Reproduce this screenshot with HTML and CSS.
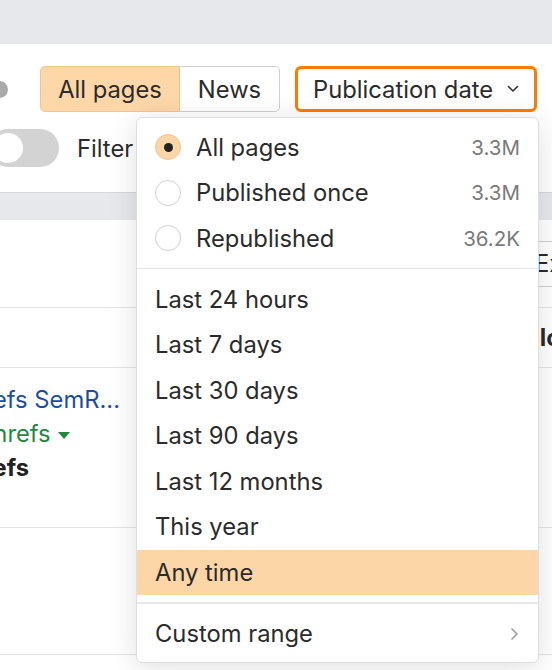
FILE: index.html
```html
<!DOCTYPE html>
<html>
<head>
<meta charset="utf-8">
<link rel="stylesheet" href="styles.css">
</head>
<body>
<div class="page">
  <div class="topbar"></div>

  <div class="toolbar">
    <span class="help"></span>
    <div class="seg">
      <button class="seg-btn seg-active">All pages</button>
      <button class="seg-btn seg-news">News</button>
    </div>
    <button class="pub-btn">
      <span>Publication date</span>
      <svg class="chev-down" width="12" height="8" viewBox="0 0 12 8"><polyline points="1.5,1.5 6,6 10.5,1.5" fill="none" stroke="#333" stroke-width="1.6" stroke-linecap="round" stroke-linejoin="round"/></svg>
    </button>
  </div>

  <div class="filters">
    <span class="toggle"><span class="knob"></span></span>
    <span class="filter-label">Filter</span>
  </div>

  <div class="table">
    <div class="thead"></div>
    <div class="row row-a">
      <span class="export">Export</span>
    </div>
    <div class="row row-b">
      <span class="blog">Blog</span>
    </div>
    <div class="row row-c">
      <div class="cell">
        <div class="link-title">Ahrefs SemR...</div>
        <div class="link-domain">ahrefs <span class="tri"></span></div>
        <div class="link-bold">Ahrefs</div>
      </div>
    </div>
    <div class="row row-d"></div>
    <div class="row row-e"></div>
  </div>

  <div class="dropdown">
    <div class="item">
      <span class="radio radio-on"><span class="dot"></span></span>
      <span class="label">All pages</span>
      <span class="count">3.3M</span>
    </div>
    <div class="item">
      <span class="radio"></span>
      <span class="label">Published once</span>
      <span class="count">3.3M</span>
    </div>
    <div class="item">
      <span class="radio"></span>
      <span class="label">Republished</span>
      <span class="count">36.2K</span>
    </div>
    <div class="sep"></div>
    <div class="item">Last 24 hours</div>
    <div class="item">Last 7 days</div>
    <div class="item">Last 30 days</div>
    <div class="item">Last 90 days</div>
    <div class="item">Last 12 months</div>
    <div class="item">This year</div>
    <div class="item item-active">Any time</div>
    <div class="sep sep-b"></div>
    <div class="item">
      <span class="label">Custom range</span>
      <svg class="chev-right" width="9" height="14" viewBox="0 0 9 14"><polyline points="2,2 7,7 2,12" fill="none" stroke="#9a9a9a" stroke-width="1.6" stroke-linecap="round" stroke-linejoin="round"/></svg>
    </div>
  </div>
</div>
</body>
</html>
```

FILE: styles.css
```css
* { box-sizing: border-box; }

html, body {
  margin: 0;
  padding: 0;
}

body {
  width: 552px;
  height: 670px;
  overflow: hidden;
  background: #ffffff;
  font-family: Inter, "Noto Sans", sans-serif;
  font-size: 23.75px;
  color: #2b2b2b;
}

.page {
  position: relative;
  width: 552px;
  height: 670px;
  overflow: hidden;
}

.topbar {
  height: 44px;
  background: #e7e8eb;
}

.toolbar {
  display: flex;
  align-items: center;
  height: 46px;
  margin-top: 22px;
}

.help {
  width: 17px;
  height: 17px;
  border-radius: 50%;
  background: #a9a9a9;
  margin-left: -9px;
  flex: none;
}

.seg {
  display: flex;
  margin-left: 32px;
  height: 46px;
}

.seg-btn {
  font: inherit;
  color: #2b2b2b;
  height: 46px;
  padding: 0;
  margin: 0;
  background: #fff;
  border: 1px solid #cfcfcf;
}

.seg-active {
  width: 140px;
  background: #fdd7a8;
  border-color: #f2c48f;
  border-radius: 5px 0 0 5px;
}

.seg-news {
  width: 100px;
  border-left: none;
  border-radius: 0 5px 5px 0;
}

.pub-btn {
  font: inherit;
  color: #2b2b2b;
  margin-left: 15px;
  width: 242px;
  height: 46px;
  padding: 0 0 0 15px;
  background: #fff;
  border: 3px solid #ff7a00;
  border-radius: 6px;
  display: flex;
  align-items: center;
}

.chev-down {
  margin-left: 14px;
}

.filters {
  display: flex;
  align-items: center;
  height: 38px;
  margin-top: 17px;
}

.toggle {
  position: relative;
  width: 70px;
  height: 38px;
  border-radius: 19px;
  background: #d3d3d3;
  margin-left: -11px;
  flex: none;
}

.knob {
  position: absolute;
  left: 4px;
  top: 4px;
  width: 30px;
  height: 30px;
  border-radius: 50%;
  background: #fff;
}

.filter-label {
  margin-left: 18px;
}

.table {
  margin-top: 25px;
}

.thead {
  height: 28px;
  background: #e7e8eb;
  border-top: 1px solid #d6d7da;
}

.row {
  border-bottom: 1px solid #e4e4e4;
  display: flex;
}

.row-a {
  height: 88px;
  align-items: flex-start;
}

.export {
  margin-left: 521px;
  margin-top: 21px;
  height: 46px;
  padding: 0 13px;
  border: 1px solid #d0d0d0;
  border-radius: 5px;
  line-height: 44px;
  white-space: nowrap;
}

.row-b {
  height: 60px;
  align-items: center;
}

.blog {
  margin-left: 524px;
  font-weight: 700;
}

.row-c {
  height: 160px;
}

.cell {
  padding-top: 15px;
  line-height: 34px;
  white-space: nowrap;
}

.link-title {
  color: #1b4ea2;
  margin-left: -46px;
}

.link-domain {
  color: #1f8a3e;
  display: flex;
  align-items: center;
  margin-left: -20px;
}

.tri {
  width: 0;
  height: 0;
  border-left: 6px solid transparent;
  border-right: 6px solid transparent;
  border-top: 7px solid #1f8a3e;
  margin-left: 7px;
  margin-top: 2px;
}

.link-bold {
  font-weight: 700;
  color: #222;
  margin-left: -49px;
}

.row-d {
  height: 127px;
}

.row-e {
  height: 40px;
}

.dropdown {
  position: absolute;
  left: 136px;
  top: 117px;
  width: 403px;
  height: 546px;
  background: #fff;
  border: 1px solid #dedede;
  border-radius: 6px;
  box-shadow: 0 4px 28px rgba(0, 0, 0, 0.13);
  padding: 6.5px 0;
}

.item {
  height: 45.5px;
  display: flex;
  align-items: center;
  padding: 0 18px;
  white-space: nowrap;
}

.item-active {
  background: #fdd6a8;
}

.radio {
  width: 26px;
  height: 26px;
  border-radius: 50%;
  border: 1px solid #cfcfcf;
  background: #fff;
  margin-right: 15px;
  display: flex;
  align-items: center;
  justify-content: center;
  flex: none;
}

.radio-on {
  background: #fdd6a8;
  border-color: #f3c08c;
}

.dot {
  width: 9px;
  height: 9px;
  border-radius: 50%;
  background: #222;
}

.label {
  flex: 1;
}

.count {
  color: #7a7a7a;
  font-size: 20.5px;
}

.sep {
  height: 1px;
  background: #e6e6e6;
  margin: 7px 0 7.5px;
}

.sep-b {
  height: 2px;
  background: #e9e9e9;
  margin: 7px 0 7px;
}

.chev-right {
  margin-right: 1px;
}
```
